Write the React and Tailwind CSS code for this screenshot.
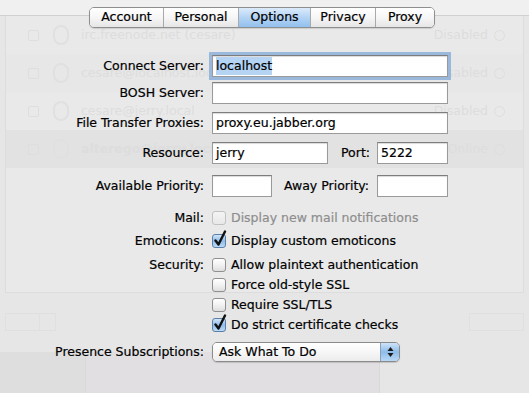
import React from "react";

const font = { fontFamily: '"DejaVu Sans", "Liberation Sans", sans-serif' };

function Tabs() {
    const tabs = [
        { label: "Account", w: "w-[73px]" },
        { label: "Personal", w: "w-[75px]" },
        { label: "Options", w: "w-[72px]", active: true },
        { label: "Privacy", w: "w-[65px]" },
        { label: "Proxy", w: "w-[59px]" },
    ];
    return (
        <div className="ml-[89px] mt-[7px] flex h-[21px] w-fit overflow-hidden rounded-[5px] border border-[#8e8e8e] shadow-[0_1px_1px_rgba(0,0,0,0.12)]">
            {tabs.map((t, i) => (
                <div
                    key={t.label}
                    className={
                        (t.active
                            ? "bg-gradient-to-b from-[#dcebfb] via-[#b3d3f5] to-[#92c0ee] "
                            : "bg-gradient-to-b from-white via-[#f6f6f6] to-[#e6e6e6] ") +
                        (i > 0 ? "border-l border-[#a9a9a9] " : "") +
                        t.w +
                        " flex items-center justify-center text-[12.5px] text-black"
                    }
                >
                    {t.label}
                </div>
            ))}
        </div>
    );
}

function Field({ value, w, focused, selected }) {
    return (
        <div
            className={
                w +
                " flex h-[22px] shrink-0 items-center border border-[#9a9a9a] border-t-[#7d7d7d] bg-white px-[3px] text-[12.5px] text-black shadow-[inset_0_1px_1px_rgba(0,0,0,0.15)] " +
                (focused ? "outline outline-[3px] outline-[#87acd9]/80" : "")
            }
        >
            {selected ? <span className="bg-[#b5d3f3]">{value}</span> : value}
        </div>
    );
}

function Label({ children, w = "w-[204px]" }) {
    return <div className={w + " shrink-0 text-right text-[12.5px] text-black"}>{children}</div>;
}

function Check({ checked, disabled }) {
    return (
        <div className="relative h-[14px] w-[14px] shrink-0">
            <div
                className={
                    "h-[14px] w-[14px] rounded-[3px] border " +
                    (disabled
                        ? "border-[#c2c2c2] bg-gradient-to-b from-[#f4f4f4] to-[#e8e8e8]"
                        : checked
                        ? "border-[#5a7fa8] bg-gradient-to-b from-[#d2e5f8] via-[#8fbde9] to-[#bcdaf6]"
                        : "border-[#8f8f8f] bg-gradient-to-b from-white via-[#f2f2f2] to-[#dedede]")
                }
            />
            {checked && (
                <svg className="absolute left-[1px] top-[-4px]" width="14" height="17" viewBox="0 0 14 17">
                    <path d="M2.5 10.5 L5.5 14.5 L12 1.5" fill="none" stroke="#111" strokeWidth="2.4" strokeLinecap="round" strokeLinejoin="round" />
                </svg>
            )}
        </div>
    );
}

function CheckRow({ label, text, checked, disabled, mt }) {
    return (
        <div className={"flex h-[18px] items-center " + mt}>
            <Label>{label}</Label>
            <div className="ml-[8px] flex items-center gap-[5px]">
                <Check checked={checked} disabled={disabled} />
                <span className={"text-[12.5px] " + (disabled ? "text-[#8e8e8e]" : "text-black")}>{text}</span>
            </div>
        </div>
    );
}

function Ghost() {
    const rows = [
        { name: "irc.freenode.net (cesare)", status: "Disabled" },
        { name: "cesare@localhost.local", status: "Disabled" },
        { name: "cesare@jerry.local", status: "Disabled" },
        { name: "alterego@jerry.local", status: "Online", bold: true },
    ];
    return (
        <div className="absolute inset-0 flex flex-col bg-[#e6e6e6]">
            <div className="h-[16px] shrink-0 border-b border-[#d0d0d0] bg-[#f0f0f0]" />
            <div className="mx-[5px] h-[277px] shrink-0 border border-t-0 border-[#dddddd] bg-[#e9e9e9]">
                {rows.map((r, i) => (
                    <div
                        key={r.name}
                        className={
                            "flex h-[38px] items-center pl-[22px] pr-[18px] text-[12.5px] text-[#dddddd] " +
                            (i === 3 ? "bg-[#e2e2e2]" : i % 2 ? "bg-[#e7e7e7]" : "")
                        }
                    >
                        <div className="h-[11px] w-[11px] rounded-[2px] border border-[#dedede]" />
                        <div className="ml-[14px] h-[20px] w-[16px] rounded-full border-2 border-[#e0e0e0]" />
                        <span className={"ml-[12px] " + (r.bold ? "font-bold" : "")}>{r.name}</span>
                        <span className="ml-auto">{r.status}</span>
                        <div className="ml-[6px] h-[11px] w-[11px] rounded-full border border-[#dedede]" />
                    </div>
                ))}
            </div>
            <div className="mx-[5px] mt-[20px] flex h-[18px] shrink-0 items-center">
                <div className="h-[18px] w-[35px] border border-[#e0e0e0]" />
                <div className="h-[18px] w-[16px] border border-l-0 border-[#e0e0e0]" />
                <div className="ml-auto h-[18px] w-[55px] border border-[#e0e0e0]" />
            </div>
            <div className="mt-[21px] flex flex-1 bg-[#dedede]">
                <div className="ml-[85px] w-[295px] border-x border-[#d8d8d8] bg-[#e2dfe2]" />
                <div className="flex-1 bg-[#e6e6e6]" />
            </div>
        </div>
    );
}

export default function App() {
    return (
        <div className="relative h-[393px] w-[529px] overflow-hidden" style={font}>
            <Ghost />
            <div className="relative flex flex-col [-webkit-text-stroke:0.2px_currentColor]">
                <Tabs />

                <div className="mt-[27px] flex items-center">
                    <Label>Connect Server:</Label>
                    <div className="ml-[8px] flex">
                        <Field value="localhost" w="w-[236px]" focused selected />
                    </div>
                </div>

                <div className="mt-[5px] flex items-center">
                    <Label>BOSH Server:</Label>
                    <div className="ml-[8px] flex">
                        <Field value="" w="w-[236px]" />
                    </div>
                </div>

                <div className="mt-[8px] flex items-center">
                    <Label>File Transfer Proxies:</Label>
                    <div className="ml-[8px] flex">
                        <Field value="proxy.eu.jabber.org" w="w-[236px]" />
                    </div>
                </div>

                <div className="mt-[8px] flex items-center">
                    <Label>Resource:</Label>
                    <div className="ml-[8px] flex">
                        <Field value="jerry" w="w-[116px]" />
                    </div>
                    <Label w="w-[42px]">Port:</Label>
                    <div className="ml-[7px] flex">
                        <Field value="5222" w="w-[71px]" />
                    </div>
                </div>

                <div className="mt-[11px] flex items-center">
                    <Label>Available Priority:</Label>
                    <div className="ml-[8px] flex">
                        <Field value="" w="w-[60px]" />
                    </div>
                    <Label w="w-[97px]">Away Priority:</Label>
                    <div className="ml-[8px] flex">
                        <Field value="" w="w-[71px]" />
                    </div>
                </div>

                <CheckRow mt="mt-[12px]" label="Mail:" text="Display new mail notifications" disabled />
                <CheckRow mt="mt-[5px]" label="Emoticons:" text="Display custom emoticons" checked />
                <CheckRow mt="mt-[6px]" label="Security:" text="Allow plaintext authentication" />
                <CheckRow mt="mt-[2px]" label="" text="Force old-style SSL" />
                <CheckRow mt="mt-[2px]" label="" text="Require SSL/TLS" />
                <CheckRow mt="mt-[2px]" label="" text="Do strict certificate checks" checked />

                <div className="mt-[8px] flex items-center">
                    <Label>Presence Subscriptions:</Label>
                    <div className="ml-[8px] flex h-[20px] w-[188px] overflow-hidden rounded-[5px] border border-[#8a8a8a] shadow-[0_1px_1px_rgba(0,0,0,0.15)]">
                        <div className="flex flex-1 items-center bg-gradient-to-b from-white via-[#f7f7f7] to-[#ececec] pl-[6px] text-[12.5px] text-black">
                            Ask What To Do
                        </div>
                        <div className="flex w-[19px] items-center justify-center border-l border-[#8a9fb8] bg-gradient-to-b from-[#cfe3f8] via-[#8dbcea] to-[#b9d8f5]">
                            <svg width="7" height="12" viewBox="0 0 7 12">
                                <path d="M3.5 1 L6.5 5 H0.5 Z M3.5 11 L6.5 7 H0.5 Z" fill="#1a1a1a" />
                            </svg>
                        </div>
                    </div>
                </div>
            </div>
        </div>
    );
}
